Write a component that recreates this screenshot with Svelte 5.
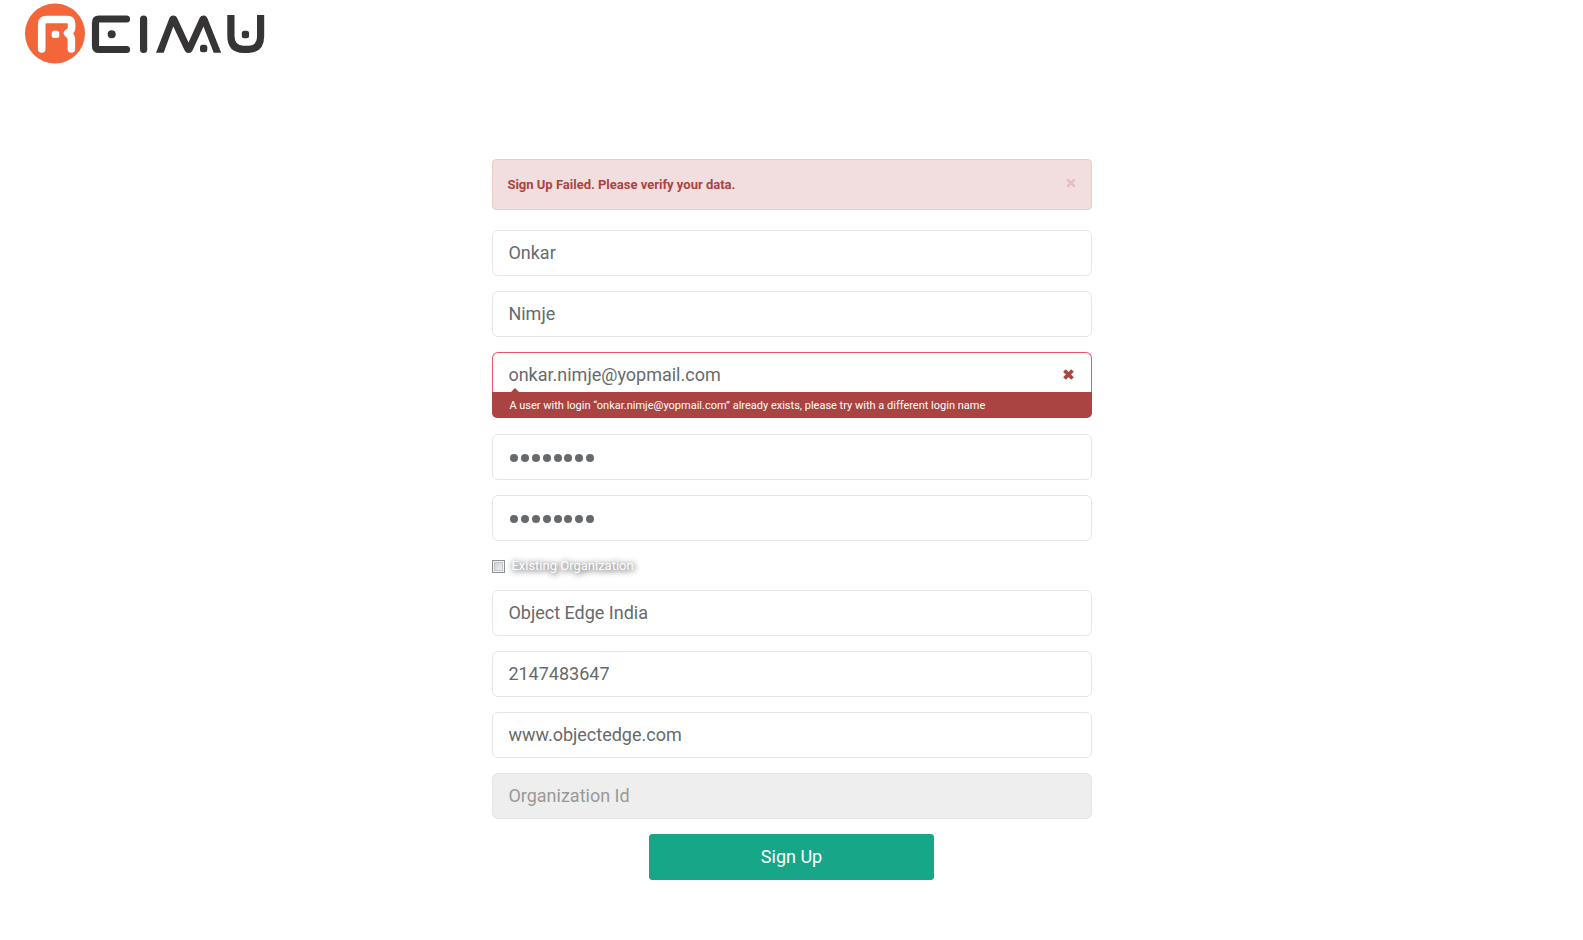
<script>
  const names = ['Onkar', 'Nimje'];
  const passwords = [8, 8];
  const organization = ['Object Edge India', '2147483647', 'www.objectedge.com'];
</script>

<header>
  <svg class="logo" width="245" height="68" viewBox="20 0 245 68" role="img" aria-label="Reimu">
    <circle cx="55" cy="33.5" r="30" fill="#f26639" />
    <path class="r" d="M41.7 49V24.5Q41.7 19.5 46.7 19.5H67.2Q71.6 19.5 71.6 23.8V27.3Q71.6 30.2 69.2 31.8L67.6 33.2 69.6 35.3Q71.4 37 71.4 40V49" />
    <rect x="51.7" y="30.7" width="7.6" height="7.4" rx="2.5" fill="#fff" />
    <g class="ink">
      <path d="M126.5 19H99Q95.5 19 95.5 22.5V46Q95.5 49.5 99 49.5H126.5" />
      <path d="M143.6 19V49.5" />
      <path d="M230.9 15V36Q230.9 49.3 243.5 49.3H248Q260.6 49.3 260.6 36V15" class="butt" />
    </g>
    <path fill="#373435" d="M156 52.8 169.3 18.5Q170.4 15.5 173.3 15.5Q176.2 15.5 177.4 18.5L188.5 42.5 199.4 18.5Q200.7 15.5 203.5 15.5Q206.3 15.5 207.5 18.5L221.2 52.8H213.7L203.5 26.5 192.5 50.5Q191.3 53 188.5 53Q185.8 53 184.7 50.5L173.3 26.5 163.7 52.8Z" />
    <g fill="#373435">
      <circle cx="111.7" cy="34.2" r="4" />
      <rect x="200" y="44.7" width="7.3" height="7.5" rx="2.5" />
      <rect x="241.8" y="30.7" width="7.3" height="7.5" rx="2.5" />
    </g>
  </svg>
</header>

<main>
  <div class="alert">
    <strong>Sign Up Failed. Please verify your data.</strong>
    <svg class="close" width="10" height="10" viewBox="0 0 10 10"><path d="M1.3 1.3 8.7 8.7M8.7 1.3 1.3 8.7" /></svg>
  </div>

  {#each names as value}
    <div class="field">{value}</div>
  {/each}

  <div class="invalid">
    <div class="entry">
      <span>onkar.nimje@yopmail.com</span>
      <svg class="cross" width="11" height="11" viewBox="0 0 11 11"><path d="M1.5 1.5 9.5 9.5M9.5 1.5 1.5 9.5" /></svg>
    </div>
    <div class="message"><span>A user with login “onkar.nimje@yopmail.com” already exists, please try with a different login name</span></div>
  </div>

  {#each passwords as count}
    <div class="field password">
      {#each Array(count) as _}<i></i>{/each}
    </div>
  {/each}

  <div class="check"><span class="box"></span><span class="label">Existing Organization</span></div>

  {#each organization as value}
    <div class="field">{value}</div>
  {/each}
  <div class="field disabled">Organization Id</div>

  <button>Sign Up</button>
</main>

<style>
  :global(body) {
    margin: 0;
    background: #fff;
    font-family: Roboto, sans-serif;
    color: #676a6c;
  }
  header {
    height: 159px;
    padding-left: 20px;
    box-sizing: border-box;
  }
  .logo { display: block; }
  .r {
    fill: none;
    stroke: #fff;
    stroke-width: 7.6;
    stroke-linecap: round;
    stroke-linejoin: round;
  }
  .ink {
    fill: none;
    stroke: #373435;
    stroke-width: 7.2;
    stroke-linecap: round;
  }
  .butt { stroke-linecap: butt; }
  main {
    width: 600px;
    margin-left: 492px;
    display: flex;
    flex-direction: column;
    gap: 15px;
  }
  .alert {
    height: 51px;
    box-sizing: border-box;
    margin-bottom: 5px;
    padding: 0 15px 0 14.4px;
    display: flex;
    align-items: center;
    justify-content: space-between;
    background: #f2dede;
    border: 1px solid #ebccd1;
    border-radius: 4px;
    color: #a94442;
    font-size: 13px;
  }
  .close {
    margin-top: -4px;
    stroke: #e4bfbf;
    stroke-width: 2.5;
  }
  .field {
    height: 46px;
    box-sizing: border-box;
    padding: 0 16px 0 15.4px;
    display: flex;
    align-items: center;
    background: #fff;
    border: 1px solid #e5e6e7;
    border-radius: 6px;
    font-size: 18px;
    line-height: 24px;
  }
  .invalid {
    height: 66px;
    box-sizing: border-box;
    margin-bottom: 1px;
  }
  .entry {
    height: 40px;
    box-sizing: border-box;
    padding: 3px 17px 0 15.4px;
    display: flex;
    align-items: center;
    justify-content: space-between;
    background: #fff;
    border: 1px solid #ed5565;
    border-bottom: 0;
    border-radius: 6px 6px 0 0;
    font-size: 18px;
  }
  .cross {
    stroke: #a94442;
    stroke-width: 3.8;
  }
  .message {
    position: relative;
    height: 26px;
    padding-left: 17.4px;
    display: flex;
    align-items: center;
    background: #a94442;
    border-radius: 0 0 5px 5px;
    color: #fff;
    font-size: 11px;
  }
  .message::before {
    content: '';
    position: absolute;
    left: 19px;
    top: -4px;
    border: 4px solid transparent;
    border-top: 0;
    border-bottom-color: #a94442;
  }
  .password {
    padding-left: 17px;
    padding-top: 2px;
    gap: 2.9px;
  }
  .password i {
    width: 8px;
    height: 8px;
    border-radius: 50%;
    background: #676a6c;
  }
  .check {
    height: 19px;
    display: flex;
    align-items: flex-start;
  }
  .box {
    width: 13px;
    height: 13px;
    box-sizing: border-box;
    margin-top: 4px;
    border: 1px solid #8e8f8f;
    box-shadow: inset 0 0 0 1px #f4f4f4, inset 0 0 0 2px #c2c6ca;
    background: linear-gradient(135deg, #c6cad0, #f6f6f6);
  }
  .label {
    margin-left: 6.4px;
    margin-top: 2px;
    color: #fff;
    font-size: 13px;
    line-height: 15px;
    text-shadow: 1px 1px 6px #000;
  }
  .disabled {
    background: #eee;
    color: #999;
  }
  button {
    margin-left: 157px;
    width: 285px;
    height: 46px;
    padding: 0 0 2px;
    background: #18a689;
    border: 1px solid #18a689;
    border-radius: 3px;
    color: #fff;
    font: 18px Roboto, sans-serif;
  }
</style>
